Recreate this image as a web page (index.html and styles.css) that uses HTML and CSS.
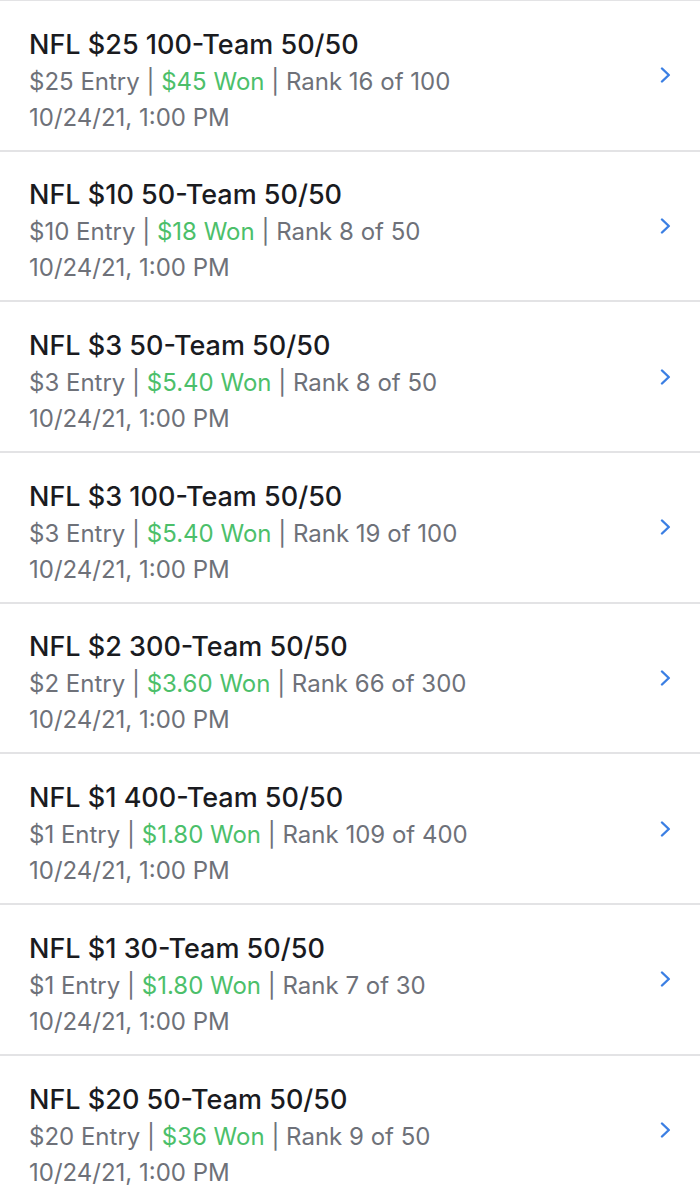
FILE: index.html
```html
<!DOCTYPE html>
<html lang="en">
<head>
    <meta charset="UTF-8">
    <meta name="viewport" content="width=device-width, initial-scale=1.0">
    <title>Contest History</title>
    <link rel="stylesheet" href="styles.css">
</head>
<body>
    <ul class="contest-list">
        <li class="contest">
            <div class="info">
                <div class="title">NFL $25 100-Team 50/50</div>
                <div class="line">$25 Entry | <span class="won">$45 Won</span> | Rank 16 of 100</div>
                <div class="line">10/24/21, 1:00 PM</div>
            </div>
            <svg class="chevron" viewBox="0 0 11 16"><path d="M2 1.5L8.8 8 2 14.5"/></svg>
        </li>
        <li class="contest">
            <div class="info">
                <div class="title">NFL $10 50-Team 50/50</div>
                <div class="line">$10 Entry | <span class="won">$18 Won</span> | Rank 8 of 50</div>
                <div class="line">10/24/21, 1:00 PM</div>
            </div>
            <svg class="chevron" viewBox="0 0 11 16"><path d="M2 1.5L8.8 8 2 14.5"/></svg>
        </li>
        <li class="contest">
            <div class="info">
                <div class="title">NFL $3 50-Team 50/50</div>
                <div class="line">$3 Entry | <span class="won">$5.40 Won</span> | Rank 8 of 50</div>
                <div class="line">10/24/21, 1:00 PM</div>
            </div>
            <svg class="chevron" viewBox="0 0 11 16"><path d="M2 1.5L8.8 8 2 14.5"/></svg>
        </li>
        <li class="contest">
            <div class="info">
                <div class="title">NFL $3 100-Team 50/50</div>
                <div class="line">$3 Entry | <span class="won">$5.40 Won</span> | Rank 19 of 100</div>
                <div class="line">10/24/21, 1:00 PM</div>
            </div>
            <svg class="chevron" viewBox="0 0 11 16"><path d="M2 1.5L8.8 8 2 14.5"/></svg>
        </li>
        <li class="contest">
            <div class="info">
                <div class="title">NFL $2 300-Team 50/50</div>
                <div class="line">$2 Entry | <span class="won">$3.60 Won</span> | Rank 66 of 300</div>
                <div class="line">10/24/21, 1:00 PM</div>
            </div>
            <svg class="chevron" viewBox="0 0 11 16"><path d="M2 1.5L8.8 8 2 14.5"/></svg>
        </li>
        <li class="contest">
            <div class="info">
                <div class="title">NFL $1 400-Team 50/50</div>
                <div class="line">$1 Entry | <span class="won">$1.80 Won</span> | Rank 109 of 400</div>
                <div class="line">10/24/21, 1:00 PM</div>
            </div>
            <svg class="chevron" viewBox="0 0 11 16"><path d="M2 1.5L8.8 8 2 14.5"/></svg>
        </li>
        <li class="contest">
            <div class="info">
                <div class="title">NFL $1 30-Team 50/50</div>
                <div class="line">$1 Entry | <span class="won">$1.80 Won</span> | Rank 7 of 30</div>
                <div class="line">10/24/21, 1:00 PM</div>
            </div>
            <svg class="chevron" viewBox="0 0 11 16"><path d="M2 1.5L8.8 8 2 14.5"/></svg>
        </li>
        <li class="contest">
            <div class="info">
                <div class="title">NFL $20 50-Team 50/50</div>
                <div class="line">$20 Entry | <span class="won">$36 Won</span> | Rank 9 of 50</div>
                <div class="line">10/24/21, 1:00 PM</div>
            </div>
            <svg class="chevron" viewBox="0 0 11 16"><path d="M2 1.5L8.8 8 2 14.5"/></svg>
        </li>
    </ul>
</body>
</html>
```

FILE: styles.css
```css
body {
    margin: 0;
    background: #fff;
    font-family: Inter, sans-serif;
    overflow: hidden;
}
.contest-list {
    list-style: none;
    margin: 0;
    padding: 0;
    border-top: 1px solid #e3e3e5;
}
.contest {
    display: flex;
    align-items: center;
    height: 148.7px;
    padding: 0 29px;
    border-bottom: 2px solid #e3e3e5;
}
.info {
    flex: 1;
    align-self: flex-start;
    padding-top: 23.7px;
}
.title {
    font-size: 27px;
    font-weight: 500;
    color: #1a1b1f;
    line-height: 39px;
}
.line {
    font-size: 24px;
    color: #6e7179;
    line-height: 36px;
}
.won {
    color: #4cbf6a;
}
.chevron {
    width: 11px;
    height: 16px;
    fill: none;
    stroke: #3b7fe3;
    stroke-width: 2.4;
    stroke-linecap: round;
    stroke-linejoin: round;
}
```
